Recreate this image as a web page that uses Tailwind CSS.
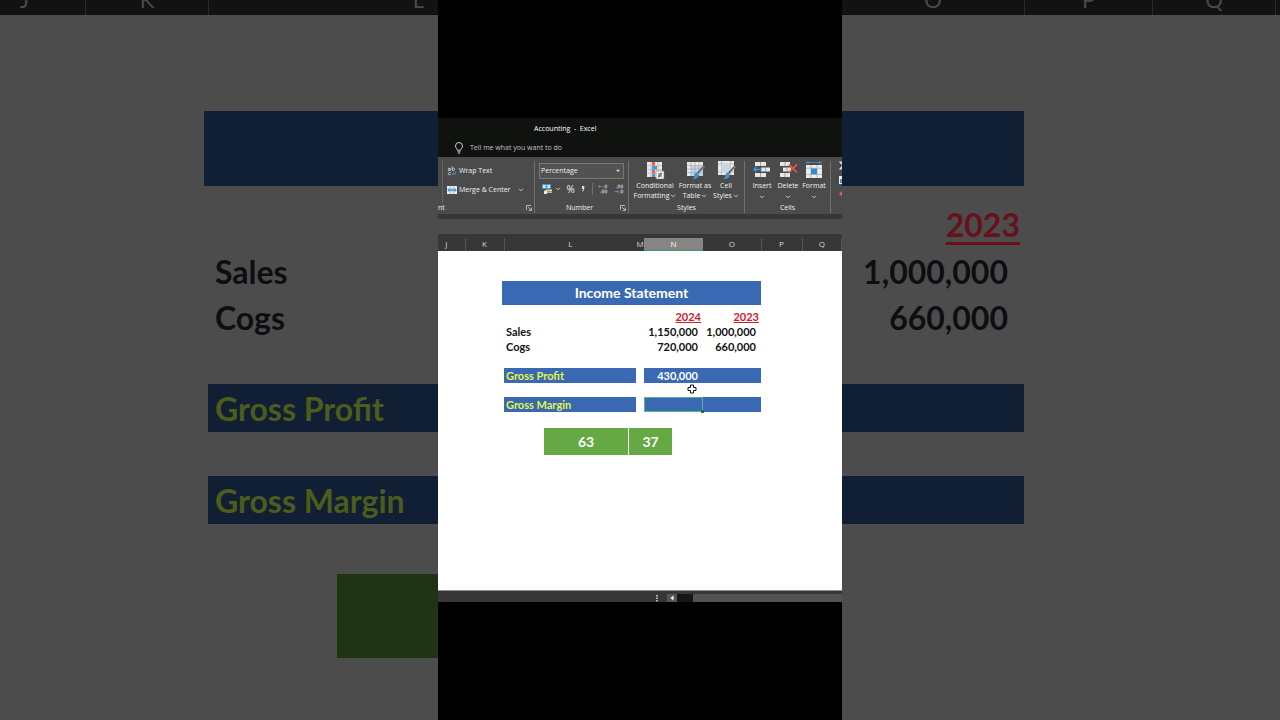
<!DOCTYPE html>
<html lang="en">
  <head>
    <meta charset="UTF-8" />
    <meta name="viewport" content="width=device-width, initial-scale=1.0" />
    <title>Accounting - Excel</title>
    <script src="https://cdn.jsdelivr.net/npm/@tailwindcss/browser@4"></script>
  </head>
  <body class="flex h-screen min-h-[484px] overflow-hidden bg-black font-['Open_Sans','Noto_Sans',sans-serif]">
    <!-- Shared icons -->
    <svg class="hidden" aria-hidden="true">
      <symbol id="chevron" viewBox="0 0 6 4"><path d="M1 .8 3 2.8 5 .8" fill="none" stroke="#d4d4d4" stroke-width=".9" /></symbol>
      <symbol id="launcher" viewBox="0 0 6 6"><path d="M.5 4.8V.5H5M2.2 2.2 5 5M5.4 2.6v2.8H2.6" fill="none" stroke="#d4d4d4" stroke-width=".8" /></symbol>
    </svg>

    <!-- Left dimmed backdrop -->
    <aside class="flex flex-1 flex-col items-end overflow-hidden bg-[#4c4c4c]" aria-hidden="true">
      <div class="flex h-[15px] w-full justify-end bg-[#121212] font-['Lato',sans-serif] text-[22px] leading-[30px] text-[#4a4a4a]">
        <div class="flex w-[86px] items-end justify-center overflow-hidden border-r border-[#2a2a2a] pr-9"><span>J</span></div>
        <div class="flex w-[123px] items-end justify-center overflow-hidden border-r border-[#2a2a2a]"><span>K</span></div>
        <div class="flex w-[229px] items-end justify-end overflow-hidden pr-3.5"><span>L</span></div>
      </div>
      <div class="mt-24 h-[75px] w-[234px] bg-[#111f35]"></div>
      <table class="mt-[62px] w-[230px] text-left font-['Lato',sans-serif] text-[32px] leading-none font-bold text-[#0e0e12]">
        <tbody>
          <tr class="h-[47px]"><th class="px-[7px]">Sales</th></tr>
          <tr class="h-[46px]"><th class="px-[7px]">Cogs</th></tr>
          <tr class="h-[43px]"><td></td></tr>
          <tr class="h-12 bg-[#111f35] text-[#4b5c1b]"><th class="px-[7px] pt-0.5">Gross Profit</th></tr>
          <tr class="h-11"><td></td></tr>
          <tr class="h-12 bg-[#111f35] text-[#4b5c1b]"><th class="px-[7px] pt-0.5">Gross Margin</th></tr>
        </tbody>
      </table>
      <div class="mt-[50px] h-[84px] w-[101px] bg-[#1f3315]"></div>
    </aside>

    <main class="flex w-[404px] shrink-0 flex-col justify-center">
      <!-- Title bar -->
      <header class="bg-[#0f120f] text-[7px] text-[#c8c8c8]">
        <h1 class="h-[21px] pl-24 leading-[21px] font-medium whitespace-pre text-white">Accounting  -  Excel</h1>
        <label class="flex h-[18px] items-center gap-1.5 pl-4">
          <svg class="h-3 w-2.5" viewBox="0 0 10 12" fill="none" stroke="#dedede" stroke-width=".9"><path d="M3.3 8.2C3.3 6.6 1.5 6 1.5 4a3.5 3.5 0 0 1 7 0c0 2-1.8 2.6-1.8 4.2zM3.5 9.8h3M4 11.2h2" /></svg>
          <input class="w-40 placeholder:text-[#c0c0c0]" placeholder="Tell me what you want to do" />
        </label>
      </header>

      <!-- Ribbon -->
      <section class="flex h-[57px] overflow-hidden bg-[#4b4b4b] pt-1 pb-px text-[7px] leading-[10px] text-[#f0f0f0]">
        <div class="flex w-[97px] flex-col border-r border-[#707070]">
          <div class="ml-1 flex flex-1 flex-col gap-[3px] border-l border-[#666666] pt-0.5 pl-1">
            <button class="flex h-4 items-center gap-0.5">
              <svg class="h-2.5 w-2.5" viewBox="0 0 10 10" fill="none" stroke="#d8d8d8" stroke-width=".8"><path d="M1.2 2.5q2.2-1 2.2.5v1.6H2q-1.2-.1-1-1 .3-.7 2.4-.6M5.2.5v4.1M5.2 3q.3-1.1 1.4-1 1.1.2 1 1.3-.1 1.3-1.2 1.3-1 0-1.2-1M3.6 6.7Q1.3 6 1.3 7.7q.1 1.7 2.3 1" /><path d="M8.5 5.5v2.3H5.2M6.5 6.5 5.2 7.8l1.3 1.3" stroke="#4c9fd8" /></svg>
              Wrap Text
            </button>
            <button class="flex h-4 items-center gap-0.5">
              <svg class="h-2.5 w-2.5" viewBox="0 0 10 10"><path fill="#eee" d="M0 1h10v8H0z" /><path fill="#9ccbed" d="M.5 3.3h9v3.4h-9z" /><path d="M3.3 1v2M6.7 1v2M3.3 7v2M6.7 7v2" stroke="#888" stroke-width=".5" /><path d="M1.2 5h7.6M2.5 3.9 1.2 5l1.3 1.1M7.5 3.9 8.8 5 7.5 6.1" fill="none" stroke="#2675b5" stroke-width=".8" /></svg>
              Merge &amp; Center
              <svg class="ml-1.5 h-1 w-1.5"><use href="#chevron" /></svg>
            </button>
          </div>
          <div class="flex items-center justify-between pr-0.5"><span>nt</span><button aria-label="Alignment settings"><svg class="size-1.5"><use href="#launcher" /></svg></button></div>
        </div>

        <div class="flex w-[94px] flex-col border-r border-[#707070] pt-0.5 pr-0.5 pl-1">
          <div class="mr-0.5 flex h-4 items-center border border-[#777777] bg-[#525252] pr-0.5">
            <select class="flex-1 appearance-none pl-px" aria-label="Number format"><option>Percentage</option></select>
            <svg class="h-1 w-1.5" viewBox="0 0 6 4"><path d="M1 .8h4L3 3.2z" fill="#d4d4d4" /></svg>
          </div>
          <div class="flex h-5 items-center justify-between px-0.5">
            <button class="flex items-center gap-0.5" aria-label="Accounting format">
              <svg class="h-3 w-3" viewBox="0 0 12 12"><path d="M1 1h9v5H1z" fill="#3d93d1" /><path d="M2 2h7v3H2z" fill="#d7ebf8" /><circle cx="5.5" cy="3.5" r="1.2" fill="#3d93d1" /><path d="M5 6.5h6v1.400H5zM6 8.400h5v1.300H6z" fill="#f1d493" /><path d="M3 7.500h3V11H3z" fill="#e8e8e8" /></svg>
              <svg class="h-1 w-1.5"><use href="#chevron" /></svg>
            </button>
            <button class="text-[10px]">%</button>
            <button aria-label="Comma style"><svg class="h-2 w-1.5" viewBox="0 0 6 8"><path d="M2 1h2.300v2.600Q4 6 2 7q1-1.500 1-3H2z" fill="#e6e6e6" /></svg></button>
            <span class="h-3 w-px bg-[#6d6d6d]"></span>
            <button aria-label="Increase decimal"><svg class="h-2.5 w-2.5" viewBox="0 0 10 10" fill="none" stroke="#d0d0d0" stroke-width=".8"><path d="M4.500 2.500H.5M1.800 1.200.5 2.500l1.300 1.300" stroke="#4c9fd8" /><rect x="7" y="1" width="1.800" height="3" rx=".8" /><rect x="4" y="6" width="1.800" height="3" rx=".8" /><rect x="7" y="6" width="1.800" height="3" rx=".8" /><path d="M5.500 4h.6M2.300 9h.7" /></svg></button>
            <button aria-label="Decrease decimal"><svg class="h-2.5 w-2.5" viewBox="0 0 10 10" fill="none" stroke="#d0d0d0" stroke-width=".8"><path d="M.5 7.500h4M3.200 6.200l1.300 1.300-1.300 1.300" stroke="#4c9fd8" /><rect x="4" y="1" width="1.800" height="3" rx=".8" /><rect x="7" y="1" width="1.800" height="3" rx=".8" /><rect x="7" y="6" width="1.800" height="3" rx=".8" /><path d="M2.300 4h.7M5.400 9h.7" /></svg></button>
          </div>
          <div class="mt-auto flex items-center"><span class="flex-1 text-center">Number</span><button aria-label="Number settings"><svg class="size-1.5"><use href="#launcher" /></svg></button></div>
        </div>

        <div class="flex w-[116px] flex-col border-r border-[#707070]">
          <div class="flex flex-1 pl-1">
            <button class="flex w-11 flex-col items-center whitespace-nowrap">
              <svg class="h-5 w-5 shrink-0" viewBox="0 0 20 20"><path d="M2 1h15v15H2z" fill="#eaeaea" /><path d="M2 4.700h15M2 8.500h15M2 12.200h15M6 1v15M13 1v15" stroke="#aaa" stroke-width=".6" /><path d="M7 1h3v3.500H7zM7 9h3v3.500H7z" fill="#e06054" /><path d="M7 5h5v3.500H7zM7 13h3v3H7z" fill="#4c96d3" /><path d="M11 10h8v8h-8z" fill="#f4f4f4" stroke="#777" stroke-width=".6" /><path d="M13 13h4M13 15h4M16.300 11.500l-2.600 5" stroke="#333" stroke-width=".8" /></svg>
              Conditional
              <span class="flex items-center gap-px">Formatting <svg class="h-1 w-1.5"><use href="#chevron" /></svg></span>
            </button>
            <button class="flex w-9 flex-col items-center whitespace-nowrap">
              <svg class="h-5 w-5 shrink-0" viewBox="0 0 20 20"><path d="M2 1h16v14H2z" fill="#e8e8e8" /><path d="M6 5h12v10H6z" fill="#bdd5e9" /><path d="M2 4.500h16M2 8h16M2 11.500h16M6 1v14M10 1v14M14 1v14" stroke="#a2a2a2" stroke-width=".6" /><path d="m19.500 6-6 7-1.800-1.500 6-6.500z" fill="#666" stroke="#ccc" stroke-width=".4" /><path d="M11.500 11.500q2.500.5 2.500 3-1.500 4-6.500 3.800 1.500-1 1.600-3.500.2-2.800 2.400-3.300z" fill="#3c91d6" /></svg>
              Format as
              <span class="flex items-center gap-px">Table <svg class="h-1 w-1.5"><use href="#chevron" /></svg></span>
            </button>
            <button class="flex w-[26px] flex-col items-center whitespace-nowrap">
              <svg class="h-5 w-5 shrink-0" viewBox="0 0 20 20"><path d="M2 0h16v14H2z" fill="#eaeaea" /><path d="M2 3h16M2 11h16M5.500 0v14M14.500 0v14" stroke="#a2a2a2" stroke-width=".6" /><path d="M5.500 3h9v8h-9z" fill="#c9d8e4" /><path d="m19.500 6-6 7-1.800-1.500 6-6.500z" fill="#666" stroke="#ccc" stroke-width=".4" /><path d="M11.500 11.500q2.500.5 2.500 3-1.500 4-6.500 3.800 1.500-1 1.600-3.500.2-2.800 2.400-3.300z" fill="#3c91d6" /></svg>
              Cell
              <span class="flex items-center gap-px">Styles <svg class="h-1 w-1.5"><use href="#chevron" /></svg></span>
            </button>
          </div>
          <div class="text-center">Styles</div>
        </div>

        <div class="flex w-[86px] flex-col border-r border-[#707070]">
          <div class="flex flex-1 pl-1">
            <button class="flex w-[26px] flex-col items-center">
              <svg class="h-5 w-5 shrink-0" viewBox="0 0 20 20"><path d="M3 1h11v4H3zM9 6.500h9v4H9zM3 12h11v4H3z" fill="#e6e6e6" /><path d="M8.500 1v4M13.500 6.500v4M8.500 12v4" stroke="#888" stroke-width=".7" /><path d="M10 8.500H2M4.500 6 2 8.500 4.500 11" fill="none" stroke="#3c97dc" stroke-width="1.400" /></svg>
              Insert
              <svg class="mt-1 h-1 w-1.5"><use href="#chevron" /></svg>
            </button>
            <button class="flex w-[26px] flex-col items-center">
              <svg class="h-5 w-5 shrink-0" viewBox="0 0 20 20"><path d="M2 1h10v4H2zM5 6.500h8v4H5zM2 12h10v4H2z" fill="#e6e6e6" /><path d="M7 1v4M9 6.500v4M7 12v4" stroke="#888" stroke-width=".7" /><path d="m11 3.500 8 8M19 3.500l-8 8" stroke="#e65b40" stroke-width="1.700" /></svg>
              Delete
              <svg class="mt-1 h-1 w-1.5"><use href="#chevron" /></svg>
            </button>
            <button class="flex w-[26px] flex-col items-center">
              <svg class="h-5 w-5 shrink-0" viewBox="0 0 20 20"><path d="M3 0v3M17 0v3M3 1.500h14M5 .3 3.500 1.500 5 2.700M15 .3l1.500 1.200L15 2.700" fill="none" stroke="#3c97dc" stroke-width=".8" /><path d="M2 4h16v13H2z" fill="#ececec" /><path d="M2 7.200h16M2 13.500h16M7 4v13M13 4v13" stroke="#aaa" stroke-width=".7" /><path d="M7 7.500h6v5.700H7z" fill="#318bd0" /></svg>
              Format
              <svg class="mt-1 h-1 w-1.5"><use href="#chevron" /></svg>
            </button>
          </div>
          <div class="text-center">Cells</div>
        </div>

        <div class="flex flex-1 flex-col gap-1 overflow-hidden pl-2">
          <svg class="size-2.5 shrink-0" viewBox="0 0 10 10"><path d="M7 1H1l3 3.500L1 8h6" fill="none" stroke="#eee" stroke-width="1.200" /></svg>
          <svg class="size-2.5 shrink-0" viewBox="0 0 10 10"><path d="M0 1h9v8H0z" fill="#eee" /><path d="M1 4h7v4H1z" fill="#3c97dc" /></svg>
          <svg class="size-2.5 shrink-0" viewBox="0 0 10 10"><path d="m0 5 4-4 4 3-4 4z" fill="#e45b8e" /></svg>
        </div>
      </section>

      <!-- Formula bar -->
      <div class="h-5 border-t-[5px] border-[#373737] bg-[#4d4d4d]"></div>

      <!-- Column headings -->
      <div class="bg-[#373737] pt-1">
        <table class="w-full table-fixed border-collapse text-center text-[8px] leading-[12px] text-[#d6d6d6]">
          <thead>
            <tr>
              <th class="w-[27px] border-r border-[#555555] pr-2.5 font-normal">J</th>
              <th class="w-[39px] border-r border-[#555555] font-normal">K</th>
              <th class="w-[132px] font-normal">L</th>
              <th class="w-2 font-normal">M</th>
              <th class="w-[59px] border-b border-[#3f9a66] bg-[#858585] font-normal text-white">N</th>
              <th class="w-[58px] border-r border-[#555555] font-normal">O</th>
              <th class="w-[41px] border-r border-[#555555] font-normal">P</th>
              <th class="border-r border-[#555555] font-normal">Q</th>
            </tr>
          </thead>
        </table>
      </div>

      <!-- Sheet -->
      <section class="h-[339px] bg-white pt-[30px] pr-[81px] pl-16 font-['Lato',sans-serif] font-bold">
        <h2 class="h-6 bg-[#3a69b3] text-center text-[14px] leading-6 text-white">Income Statement</h2>
        <div class="relative mt-1 pl-0.5">
          <table class="w-full table-fixed text-right text-[11px] leading-[14px] text-[#111111]">
            <thead>
              <tr class="h-[15px] text-[#c9202c]">
                <td class="w-[132px]"></td>
                <td class="w-2"></td>
                <th class="w-[59px] pr-0.5 underline">2024</th>
                <th class="pr-0.5 underline">2023</th>
              </tr>
            </thead>
            <tbody>
              <tr class="h-[15px]"><th class="pl-0.5 text-left">Sales</th><td></td><td class="pr-[5px]">1,150,000</td><td class="pr-[5px]">1,000,000</td></tr>
              <tr class="h-[15px]"><th class="pl-0.5 text-left">Cogs</th><td></td><td class="pr-[5px]">720,000</td><td class="pr-[5px]">660,000</td></tr>
              <tr class="h-[14px]"><td></td></tr>
              <tr class="h-[15px]"><th class="bg-[#3a69b3] pl-0.5 text-left text-[#e3f545]">Gross Profit</th><td></td><td class="bg-[#3a69b3] pr-[5px] text-white">430,000</td><td class="bg-[#3a69b3]"></td></tr>
              <tr class="h-[14px]"><td></td></tr>
              <tr class="h-[15px]">
                <th class="bg-[#3a69b3] pl-0.5 text-left text-[#e3f545]">Gross Margin</th>
                <td></td>
                <td class="relative bg-[#3a69b3] outline -outline-offset-1 outline-[#62ad8c]"><span class="absolute -right-px -bottom-px size-[3px] bg-[#217346]"></span></td>
                <td class="bg-[#3a69b3]"></td>
              </tr>
            </tbody>
          </table>
          <!-- Cell cursor -->
          <svg class="absolute top-[75px] left-[185px] size-[10px]" viewBox="0 0 10 10"><path d="M3.500 1h3v2.500H9v3H6.500V9h-3V6.500H1v-3h2.500z" fill="#fff" stroke="#111" /></svg>
        </div>
        <div class="mt-4 ml-[42px] flex gap-px text-center text-[14px] leading-[27px] text-white">
          <div class="w-[84px] bg-[#66a843]">63</div>
          <div class="w-[43px] bg-[#66a843]">37</div>
        </div>
      </section>

      <!-- Horizontal scroll bar -->
      <footer class="flex h-3 items-end border-t border-[#8d9590] bg-[#373737]">
        <svg class="ml-auto h-2 w-1 shrink-0" viewBox="0 0 4 8"><path d="M1.200 1h1.500v1.500H1.200zM1.200 3.500h1.500V5H1.200zM1.200 6h1.500v1.500H1.200z" fill="#ddd" /></svg>
        <button class="ml-2 flex h-2 w-2.5 items-center justify-center bg-[#555555]" aria-label="Scroll left"><svg class="h-1.5 w-1" viewBox="0 0 4 6"><path d="M3.500.5v5L.5 3z" fill="#fff" /></svg></button>
        <div class="h-2 w-4 bg-[#161616]"></div>
        <div class="h-2 w-[149px] bg-[#525252]"></div>
      </footer>
    </main>

    <!-- Right dimmed backdrop -->
    <aside class="flex flex-1 flex-col items-start overflow-hidden bg-[#4c4c4c]" aria-hidden="true">
      <div class="flex h-[15px] w-full bg-[#121212] font-['Lato',sans-serif] text-[22px] leading-[30px] text-[#4a4a4a]">
        <div class="flex w-[183px] items-end justify-center overflow-hidden border-r border-[#2a2a2a]"><span>O</span></div>
        <div class="flex w-[128px] items-end justify-center overflow-hidden border-r border-[#2a2a2a]"><span>P</span></div>
        <div class="flex w-[123px] items-end justify-center overflow-hidden border-r border-[#2a2a2a]"><span>Q</span></div>
      </div>
      <div class="mt-24 h-[75px] w-[182px] bg-[#111f35]"></div>
      <table class="mt-4 w-[182px] text-right font-['Lato',sans-serif] text-[32px] leading-none font-bold text-[#0e0e12]">
        <tbody>
          <tr class="h-[46px] text-[#68101b]"><th class="pr-1 underline decoration-3 underline-offset-5">2023</th></tr>
          <tr class="h-[47px]"><td class="pr-4">1,000,000</td></tr>
          <tr class="h-[46px]"><td class="pr-4">660,000</td></tr>
          <tr class="h-[43px]"><td></td></tr>
          <tr class="h-12 bg-[#111f35]"><td></td></tr>
          <tr class="h-11"><td></td></tr>
          <tr class="h-12 bg-[#111f35]"><td></td></tr>
        </tbody>
      </table>
    </aside>
  </body>
</html>
